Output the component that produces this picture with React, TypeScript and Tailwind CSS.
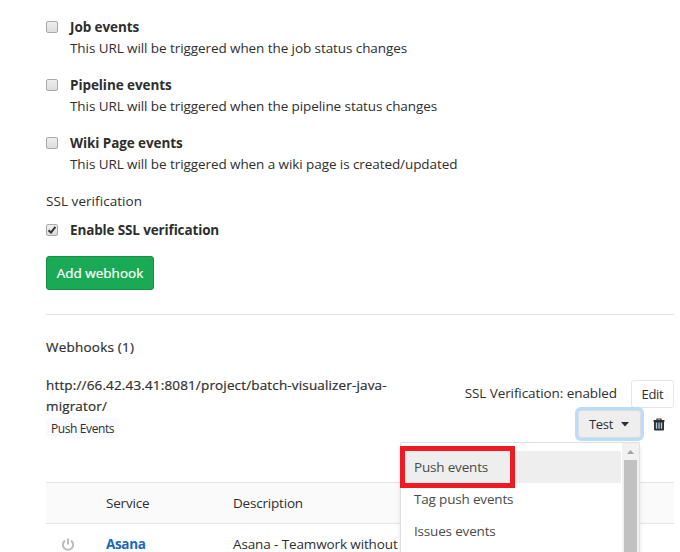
import type { ReactNode } from 'react';

const triggers = [
  { title: 'Job events', text: 'This URL will be triggered when the job status changes' },
  { title: 'Pipeline events', text: 'This URL will be triggered when the pipeline status changes' },
  { title: 'Wiki Page events', text: 'This URL will be triggered when a wiki page is created/updated' },
];

function Check({ checked = false }: { checked?: boolean }) {
  return (
    <span
      role="checkbox"
      aria-checked={checked}
      className="mt-1 flex h-3 w-3 shrink-0 items-center justify-center rounded-[2px] border border-[#a9a9a9] bg-gradient-to-b from-[#eeeeee] to-[#dddddd]"
    >
      {checked && (
        <svg className="shrink-0" width="10" height="10" viewBox="0 0 10 10">
          <path d="M1.5 5.2 4 7.6 8.4 1.8" fill="none" stroke="#333" strokeWidth="2" />
        </svg>
      )}
    </span>
  );
}

function Row({ children, checked }: { children: ReactNode; checked?: boolean }) {
  return (
    <div className="flex gap-3">
      <Check checked={checked} />
      <div>{children}</div>
    </div>
  );
}

export default function App() {
  return (
    <div className="relative h-[552px] w-[680px] overflow-hidden bg-white pl-[46px] pr-1.5 font-['Open_Sans',sans-serif] text-[13.5px] leading-[21px] tracking-[-0.08px] whitespace-nowrap text-[#2e2e2e]">
      <div className="flex flex-col gap-4 pt-[17px]">
        {triggers.map((t) => (
          <Row key={t.title}>
            <div className="font-bold tracking-[-0.08px]">{t.title}</div>
            <div>{t.text}</div>
          </Row>
        ))}
      </div>
      <div className="mt-4 tracking-[0.06px]">SSL verification</div>
      <div className="mt-2">
        <Row checked>
          <div className="font-bold tracking-[-0.14px]">Enable SSL verification</div>
        </Row>
      </div>
      <button className="mt-[15px] flex h-[34px] w-[108px] items-center justify-center rounded-[3px] border border-[#168f48] bg-[#1aaa55] tracking-normal text-white [-webkit-text-stroke:0.2px]">
        Add webhook
      </button>
      <hr className="mt-6 border-[#e1e1e1]" />
      <div className="mt-[22px] tracking-[0.22px] [-webkit-text-stroke:0.2px]">Webhooks (1)</div>

      <div className="mt-[17px] flex h-[107px] justify-between">
        <div>
          <div className="tracking-[0.15px] [-webkit-text-stroke:0.2px]">http://66.42.43.41:8081/project/batch-visualizer-java-</div>
          <div className="tracking-[0.15px] [-webkit-text-stroke:0.2px]">migrator/</div>
          <div className="mt-px flex h-5 w-[73px] items-center rounded-[3px] bg-[#f8fafd] pl-[5px] text-[12px] tracking-[-0.4px]">Push Events</div>
        </div>
        <div className="pt-[5px]">
          <div className="flex items-center justify-end gap-3.5">
            <span className="-mt-0.5">SSL Verification: enabled</span>
            <button className="flex h-7 w-[43px] items-center justify-center rounded-[3px] border border-[#e5e5e5] text-[13px] tracking-[-0.3px]">Edit</button>
          </div>
          <div className="mt-0.5 flex items-center justify-end">
            <button className="flex h-7 w-[63px] items-center gap-2 rounded-[3px] border border-[#dcdcdc] bg-[#eeeeee] pl-2.5 text-[13px] tracking-[-0.3px] ring-3 ring-[#b9dcff]">
              Test
              <svg width="8" height="5" viewBox="0 0 8 5"><path d="M0 0h8L4 4.5z" fill="#2e2e2e" /></svg>
            </button>
            <svg className="mr-[9px] ml-3" width="12" height="13" viewBox="0 0 12 13">
              <path d="M4 2.5V1h4v1.5" fill="none" stroke="#2e2e2e" strokeWidth="1.2" />
              <path d="M.5 2h11v1.7H.5z" fill="#2e2e2e" />
              <path d="M1 3h10v8.5q0 1-1 1H2q-1 0-1-1z" fill="#2e2e2e" />
              <path d="M3.5 4.5v6.2M6 4.5v6.2M8.5 4.5v6.2" fill="none" stroke="#b5cfe6" strokeWidth="1.3" />
            </svg>
          </div>
        </div>
      </div>

      <div className="grid h-[42px] grid-cols-[60px_127px_1fr] items-center border-y border-[#e5e5e5] bg-[#fafafa] tracking-[-0.2px]">
        <span />
        <span>Service</span>
        <span>Description</span>
      </div>
      <div className="grid h-[41px] grid-cols-[60px_127px_1fr] items-center">
        <svg className="ml-[15px]" width="14" height="14" viewBox="0 0 14 14" fill="none" stroke="#bcbcbc" strokeWidth="2">
          <path d="M4 2.6a5.1 5.1 0 1 0 6 0M7 .5v6" />
        </svg>
        <span className="font-bold tracking-[-0.35px] text-[#1b69b6]">Asana</span>
        <span className="tracking-[-0.12px]">Asana - Teamwork without</span>
      </div>

      <div className="absolute top-[442px] left-[400px] flex h-[130px] w-[240px] rounded-[2px] border border-[#e0e0e0] bg-white tracking-[-0.18px] text-[#4a4a4a] shadow-md">
        <div className="w-[220px] pt-2">
          <div className="flex h-8 items-center bg-[#eeeeee] pl-[13px]">Push events</div>
          <div className="flex h-8 items-center pl-[13px]">Tag push events</div>
          <div className="flex h-8 items-center pl-[13px]">Issues events</div>
        </div>
        <div className="ml-px flex w-[17px] flex-col items-center bg-[#f1f1f1]">
          <svg className="mt-[7px]" width="7" height="4" viewBox="0 0 7 4"><path d="M0 4 3.5 0 7 4z" fill="#a3a3a3" /></svg>
          <div className="mt-1.5 h-28 w-[13px] bg-[#c1c1c1]" />
        </div>
      </div>
      <div className="absolute top-[446px] left-[400px] h-[42px] w-[115px] border-5 border-[#ed1c24]" />
    </div>
  );
}
